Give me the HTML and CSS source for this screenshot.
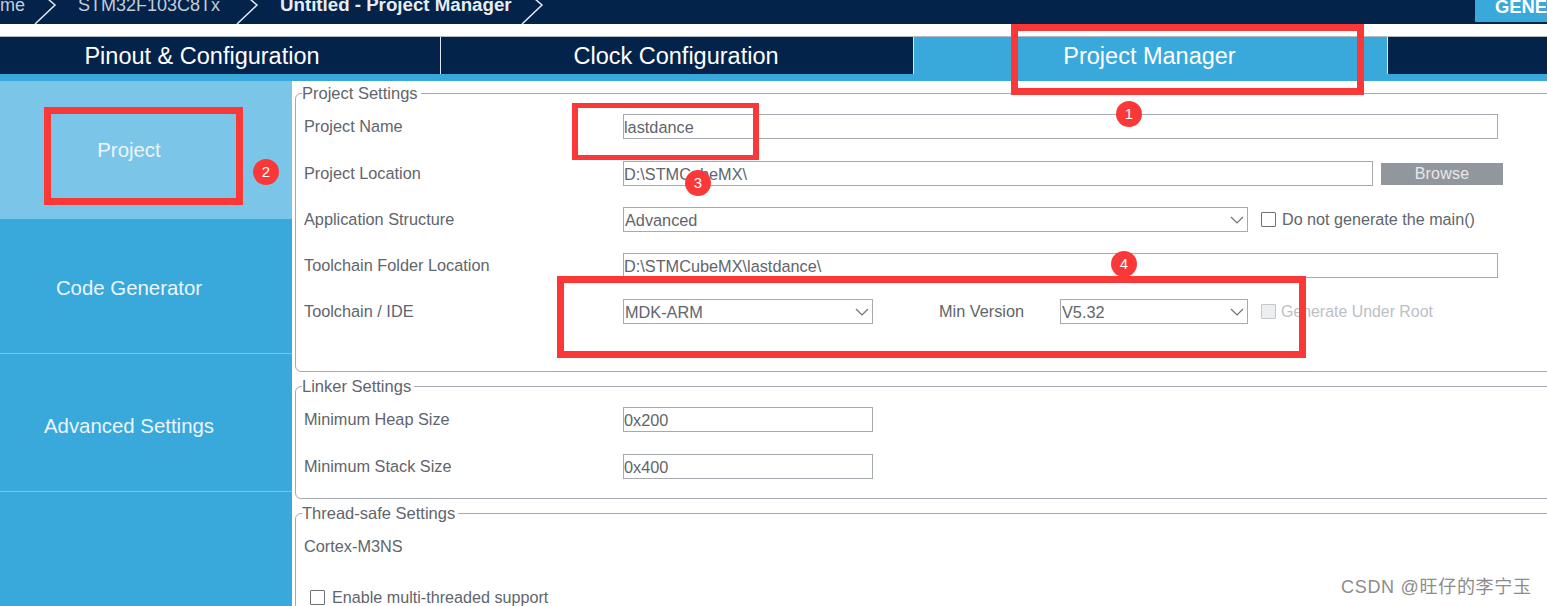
FILE: index.html
```html
<!DOCTYPE html>
<html lang="en">
<head>
<meta charset="utf-8">
<title>STM32CubeMX - Project Manager</title>
<link rel="stylesheet" href="styles.css">
</head>
<body>
<div class="page">
  <header class="topbar">
    <nav class="crumbs">
      <span class="crumb crumb-home">me</span>
      <svg class="chev" width="24" height="24" viewBox="0 0 24 24"><path d="M15 -1 L22 5 L2 24"/></svg>
      <span class="crumb crumb-chip">STM32F103C8Tx</span>
      <svg class="chev" width="24" height="24" viewBox="0 0 24 24"><path d="M15 -1 L22 5 L2 24"/></svg>
      <span class="crumb crumb-current">Untitled - Project Manager</span>
      <svg class="chev" width="24" height="24" viewBox="0 0 24 24"><path d="M15 -1 L22 5 L2 24"/></svg>
    </nav>
    <button class="generate">GENERATE CODE</button>
  </header>

  <div class="tabs">
    <div class="tab tab-pinout">Pinout &amp; Configuration</div>
    <div class="tab tab-clock">Clock Configuration</div>
    <div class="tab tab-project">Project Manager</div>
    <div class="tab tab-tools"></div>
  </div>

  <div class="workspace">
    <aside class="sidebar">
      <div class="side-item side-project">Project</div>
      <div class="side-item side-code">Code Generator</div>
      <div class="side-item side-advanced">Advanced Settings</div>
    </aside>

    <main class="content">
      <fieldset class="group group-project">
        <legend>Project Settings</legend>
        <div class="row">
          <span class="label">Project Name</span>
          <div class="field field-full">lastdance</div>
        </div>
        <div class="row">
          <span class="label">Project Location</span>
          <div class="field field-location">D:\STMCubeMX\</div>
          <button class="browse">Browse</button>
        </div>
        <div class="row">
          <span class="label">Application Structure</span>
          <div class="field field-select field-wide">Advanced
            <svg class="arrow" width="14" height="8" viewBox="0 0 14 8"><path d="M1 1 L7 7 L13 1"/></svg>
          </div>
          <span class="check"></span>
          <span class="check-text">Do not generate the main()</span>
        </div>
        <div class="row">
          <span class="label">Toolchain Folder Location</span>
          <div class="field field-full">D:\STMCubeMX\lastdance\</div>
        </div>
        <div class="row">
          <span class="label">Toolchain / IDE</span>
          <div class="field field-select field-short">MDK-ARM
            <svg class="arrow" width="14" height="8" viewBox="0 0 14 8"><path d="M1 1 L7 7 L13 1"/></svg>
          </div>
          <span class="label-inline">Min Version</span>
          <div class="field field-select field-version">V5.32
            <svg class="arrow" width="14" height="8" viewBox="0 0 14 8"><path d="M1 1 L7 7 L13 1"/></svg>
          </div>
          <span class="check check-disabled"></span>
          <span class="check-text check-text-disabled">Generate Under Root</span>
        </div>
      </fieldset>

      <fieldset class="group group-linker">
        <legend>Linker Settings</legend>
        <div class="row">
          <span class="label">Minimum Heap Size</span>
          <div class="field field-short">0x200</div>
        </div>
        <div class="row">
          <span class="label">Minimum Stack Size</span>
          <div class="field field-short">0x400</div>
        </div>
      </fieldset>

      <fieldset class="group group-thread">
        <legend>Thread-safe Settings</legend>
        <div class="row">
          <span class="label">Cortex-M3NS</span>
        </div>
        <div class="row row-enable">
          <span class="check"></span>
          <span class="check-text">Enable multi-threaded support</span>
        </div>
      </fieldset>
    </main>
  </div>

  <div class="mark mark-1"></div>
  <div class="mark mark-2"></div>
  <div class="mark mark-3"></div>
  <div class="mark mark-4"></div>
  <div class="badge badge-1">1</div>
  <div class="badge badge-2">2</div>
  <div class="badge badge-3">3</div>
  <div class="badge badge-4">4</div>
  <div class="watermark">CSDN @旺仔的李宁玉</div>
</div>
</body>
</html>
```

FILE: styles.css
```css
* { box-sizing: border-box; }

html, body {
  margin: 0;
  padding: 0;
  background: #fff;
}

.page {
  position: relative;
  width: 1547px;
  height: 606px;
  overflow: hidden;
  font-family: "Liberation Sans", Arial, sans-serif;
  font-size: 16.3px;
  color: #5f656c;
}

/* top bar */
.topbar {
  display: flex;
  justify-content: space-between;
  height: 24px;
  background: #03234b;
  overflow: hidden;
}

.crumbs {
  display: flex;
  align-items: flex-start;
}

.crumb {
  line-height: 10px;
  font-size: 18px;
  color: #c4ccd6;
  white-space: nowrap;
}

.crumb-home { width: 33px; }
.crumb-chip { width: 157px; margin-left: 21px; }
.crumb-current { width: 240px; margin-left: 21px; font-size: 18.7px; font-weight: 700; color: #e8edf2; }

.chev { flex: none; }
.chev path {
  fill: none;
  stroke: #e4e9ee;
  stroke-width: 1.5;
}

.generate {
  display: block;
  width: 72px;
  height: 22px;
  padding: 0 0 9px 20px;
  border: 0;
  background: #39a9dc;
  color: #fff;
  font: 700 18.4px/10px "Liberation Sans", Arial, sans-serif;
  text-align: left;
  white-space: nowrap;
  overflow: hidden;
}

/* tabs */
.tabs {
  display: flex;
  height: 45px;
  margin-top: 12px;
  border-top: 1px solid #b4bcc4;
  background: #39a9dc;
}

.tab {
  display: flex;
  align-items: center;
  justify-content: center;
  height: 37px;
  padding-top: 2px;
  background: #03234b;
  color: #fff;
  font-size: 23.5px;
  border-right: 1px solid #dfe6ec;
}

.tab-pinout { width: 441px; padding-right: 36px; }
.tab-clock { width: 473px; padding-right: 2px; }
.tab-project { width: 474px; padding-right: 2px; background: #39a9dc; }
.tab-tools { flex: 1; border-right: 0; }

/* layout below the tabs */
.workspace {
  display: flex;
  height: 525px;
}

.sidebar {
  flex: none;
  width: 292px;
  background: #39a9dc;
  color: #eaf6fc;
  font-size: 20.4px;
}

.side-item {
  display: flex;
  align-items: center;
  justify-content: center;
  padding-right: 34px;
  border-bottom: 1px solid #7bc5e9;
}

.side-project { height: 138px; padding-top: 1px; background: #7bc5e9; border-bottom: 0; }
.side-code { height: 135px; padding-top: 4px; }
.side-advanced { height: 138px; padding-top: 7px; }

.content {
  flex: 1;
  min-width: 0;
  padding: 3px 0 0 3px;
  overflow: hidden;
}

/* setting groups */
.group {
  width: 1400px;
  margin: 0 0 5px;
  padding: 12px 8px 0;
  border: 1px solid #a4aab0;
  border-radius: 6px;
  min-inline-size: 0;
}

.group legend {
  margin-left: -2px;
  padding: 0 3px 0 0;
  height: 18px;
  font-size: 16.5px;
  line-height: 18px;
  color: #5f656c;
}

.group-project { height: 288px; }
.group-linker { height: 122px; }
.group-thread { height: 150px; }

.row {
  display: flex;
  align-items: center;
  height: 25px;
  margin-bottom: 21px;
}

.group legend + .row { margin-bottom: 22px; }

.label { flex: none; width: 319px; }
.label-inline { flex: none; width: 121px; margin-left: 66px; }

.field {
  position: relative;
  flex: none;
  height: 25px;
  border: 1px solid #a4aab0;
  line-height: 24px;
  background: #fff;
  white-space: nowrap;
}

.field-select { padding-left: 1px; }
.field-full { width: 875px; }
.field-location { width: 750px; }
.field-wide { width: 625px; }
.field-short { width: 250px; }
.field-version { width: 188px; }

.arrow {
  position: absolute;
  right: 3px;
  top: 8px;
}

.arrow path {
  fill: none;
  stroke: #6c7278;
  stroke-width: 1.2;
}

.browse {
  flex: none;
  width: 122px;
  height: 22px;
  margin-left: 8px;
  border: 0;
  padding: 0;
  background: #92979d;
  color: #e6e9eb;
  font: 16px/22px "Liberation Sans", Arial, sans-serif;
  letter-spacing: .2px;
}

.check {
  flex: none;
  width: 15px;
  height: 15px;
  margin-left: 13px;
  border: 1px solid #6c7278;
  border-radius: 1px;
  background: #fff;
}

.check-disabled {
  border-color: #c4c8cc;
  background: #eceef0;
}

.check-text {
  margin-left: 6px;
  font-size: 16.15px;
  white-space: nowrap;
}

.check-text-disabled {
  margin-left: 5px;
  font-size: 15.9px;
  color: #bcc0c4;
}

.row-enable { margin-top: 26px; margin-left: 6px; }
.row-enable .check { margin-left: 0; }
.row-enable .check-text { margin-left: 7px; }

/* annotations over the screenshot */
.mark {
  position: absolute;
  border: 7px solid #fb3838;
}

.mark-1 { left: 1011px; top: 24px; width: 353px; height: 71px; }
.mark-2 { left: 44px; top: 107px; width: 199px; height: 98px; }
.mark-3 { left: 572px; top: 103px; width: 187px; height: 57px; border-width: 5px 6px; }
.mark-4 { left: 557px; top: 276px; width: 749px; height: 82px; }

.badge {
  position: absolute;
  width: 26px;
  height: 26px;
  border-radius: 50%;
  background: #fb3838;
  color: #fff;
  font-size: 15px;
  line-height: 26px;
  text-align: center;
}

.badge-1 { left: 1116px; top: 101px; }
.badge-2 { left: 253px; top: 159px; }
.badge-3 { left: 685px; top: 170px; }
.badge-4 { left: 1111px; top: 251px; }

.watermark {
  position: absolute;
  left: 1341px;
  top: 576px;
  font: 18px/22px "Liberation Sans", "Noto Sans CJK SC", sans-serif;
  letter-spacing: .7px;
  color: #8c8c8c;
  white-space: nowrap;
}
```
